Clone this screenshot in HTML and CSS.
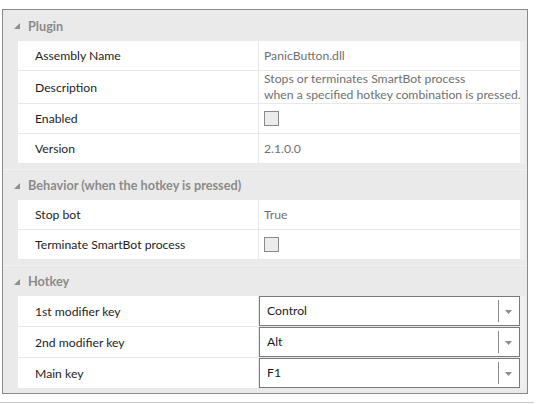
FILE: index.html
```html
<!DOCTYPE html>
<html>
<head>
<meta charset="utf-8">
<link rel="stylesheet" href="styles.css">
</head>
<body>
<div class="frame">
  <section class="cat">
    <div class="cat-head"><svg class="glyph" width="6" height="6" viewBox="0 0 6 6"><polygon points="6,0 6,6 0,6"/></svg><span>Plugin</span></div>
    <div class="cat-body">
      <div class="rows">
        <div class="row"><div class="name">Assembly Name</div><div class="value ro">PanicButton.dll</div></div>
        <div class="row tall"><div class="name">Description</div><div class="value ro">Stops or terminates SmartBot process<br>when a specified hotkey combination is pressed.</div></div>
        <div class="row"><div class="name">Enabled</div><div class="value"><span class="check"></span></div></div>
        <div class="row last"><div class="name">Version</div><div class="value ro">2.1.0.0</div></div>
      </div>
    </div>
  </section>
  <section class="cat">
    <div class="cat-head"><svg class="glyph" width="6" height="6" viewBox="0 0 6 6"><polygon points="6,0 6,6 0,6"/></svg><span>Behavior (when the hotkey is pressed)</span></div>
    <div class="cat-body">
      <div class="rows">
        <div class="row"><div class="name">Stop bot</div><div class="value ro">True</div></div>
        <div class="row last"><div class="name">Terminate SmartBot process</div><div class="value"><span class="check"></span></div></div>
      </div>
    </div>
  </section>
  <section class="cat">
    <div class="cat-head"><svg class="glyph" width="6" height="6" viewBox="0 0 6 6"><polygon points="6,0 6,6 0,6"/></svg><span>Hotkey</span></div>
    <div class="cat-body">
      <div class="rows">
        <div class="row combo-row"><div class="name">1st modifier key</div><div class="value combo-cell"><div class="combo"><span class="combo-text">Control</span><span class="combo-sep"></span><svg class="arrow" width="7" height="4" viewBox="0 0 7 4"><polygon points="0,0 7,0 3.5,4"/></svg></div></div></div>
        <div class="row combo-row"><div class="name">2nd modifier key</div><div class="value combo-cell"><div class="combo"><span class="combo-text">Alt</span><span class="combo-sep"></span><svg class="arrow" width="7" height="4" viewBox="0 0 7 4"><polygon points="0,0 7,0 3.5,4"/></svg></div></div></div>
        <div class="row combo-row last"><div class="name">Main key</div><div class="value combo-cell"><div class="combo"><span class="combo-text">F1</span><span class="combo-sep"></span><svg class="arrow" width="7" height="4" viewBox="0 0 7 4"><polygon points="0,0 7,0 3.5,4"/></svg></div></div></div>
      </div>
    </div>
  </section>
</div>
<div class="bottom-line"></div>
</body>
</html>
```
FILE: styles.css
```css
html, body {
  margin: 0;
  padding: 0;
  background: #ffffff;
}
body {
  font-family: "Lato", "Noto Sans", sans-serif;
  font-size: 12.2px;
  color: #1e1e1e;
}
.frame {
  margin: 9px 0 0 2px;
  width: 524px;
  border: 1px solid #8a8a8a;
  background: #eaeaea;
  padding-bottom: 4px;
}
.cat + .cat {
  margin-top: 5px;
}
.cat-head {
  height: 31px;
  display: flex;
  align-items: center;
  padding-left: 11px;
  font-weight: bold;
  font-size: 12.7px;
  color: #8a8a8a;
  box-sizing: border-box;
}
.cat + .cat .cat-head {
  border-top: 1px solid #f1f1f1;
}
.glyph {
  fill: #8e8e8e;
  margin-right: 8px;
  margin-top: 1px;
}
.cat-body {
  display: flex;
  padding-left: 15px;
}
.rows {
  width: 502px;
  background: #ffffff;
  border-right: 5px solid #f0f0f0;
}
.row {
  display: grid;
  grid-template-columns: 241px 1fr;
  height: 30px;
  box-sizing: border-box;
  border-bottom: 1px solid #e8e8e8;
}
.row.tall {
  height: 33px;
}
.row.combo-row {
  height: 31px;
}
.name {
  border-right: 1px solid #e8e8e8;
  padding-left: 17px;
  display: flex;
  align-items: center;
  white-space: nowrap;
}
.value {
  padding-left: 5px;
  display: flex;
  align-items: center;
  line-height: 16px;
  white-space: nowrap;
}
.value.ro {
  color: #707070;
}
.check {
  width: 13px;
  height: 13px;
  border: 1px solid #8a8a8a;
  background: #ececec;
  display: block;
}
.value.combo-cell {
  padding-left: 0;
  align-items: stretch;
}
.combo {
  flex: 1;
  border: 1px solid #7a7a7a;
  background: #ffffff;
  display: flex;
  align-items: center;
  box-sizing: border-box;
  height: 30px;
}
.combo-text {
  flex: 1;
  padding-left: 7px;
  color: #1a1a1a;
}
.combo-sep {
  width: 1px;
  height: 22px;
  background: #8a8a8a;
}
.arrow {
  fill: #8c8c8c;
  margin: 1px 7px 0 6px;
}
.bottom-line {
  margin-top: 8px;
  width: 534px;
  height: 1px;
  background: #c8c8c8;
}
```
